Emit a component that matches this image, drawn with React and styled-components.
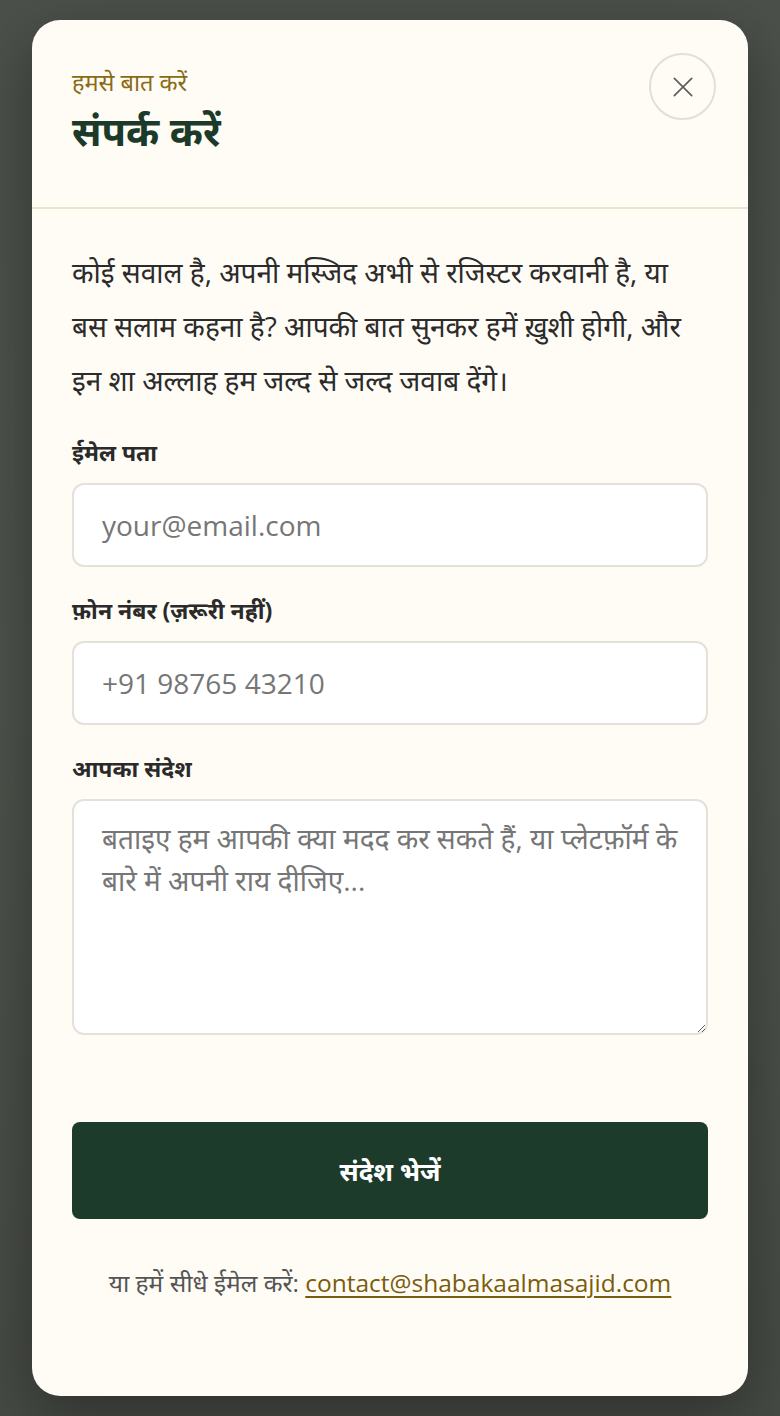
import React from "react";
import styled, { createGlobalStyle } from "styled-components";

const Global = createGlobalStyle`
  html, body { margin: 0; padding: 0; }
  body {
    font-family: "Open Sans", "Noto Sans", sans-serif;
    background: #4a4f49;
  }
  * { box-sizing: border-box; }
`;

const Overlay = styled.div`
  min-height: 1416px;
  padding: 20px 32px;
  background:
    radial-gradient(ellipse 70% 8% at 50% 76%, rgba(30, 34, 30, 0.55), transparent 70%),
    linear-gradient(180deg, #4b504a 0%, #4d524b 50%, #464a44 100%);
`;

const Modal = styled.div`
  background: #fffcf5;
  border-radius: 28px;
  height: 1376px;
  display: flex;
  flex-direction: column;
  overflow: hidden;
  box-shadow: 0 20px 60px rgba(0, 0, 0, 0.35);
`;

const Header = styled.header`
  display: flex;
  justify-content: space-between;
  align-items: flex-start;
  padding: 33px 32px 0 40px;
  height: 189px;
  border-bottom: 2px solid #ede4cf;
`;

const TitleBlock = styled.div`
  display: flex;
  flex-direction: column;
  padding-top: 14px;
`;

const Eyebrow = styled.span`
  font-size: 23.5px;
  line-height: 30px;
  color: #8a6a14;
`;

const Title = styled.h2`
  margin: 8px 0 0;
  font-size: 40px;
  line-height: 52px;
  font-weight: 700;
  color: #1b3a2a;
`;

const CloseButton = styled.button`
  width: 67px;
  height: 67px;
  border-radius: 50%;
  border: 2px solid #e2dfd8;
  background: transparent;
  display: flex;
  align-items: center;
  justify-content: center;
  padding: 0;
  cursor: pointer;
`;

const Body = styled.div`
  padding: 36px 40px 40px;
  display: flex;
  flex-direction: column;
`;

const Intro = styled.p`
  margin: 0 0 30px;
  font-size: 28px;
  line-height: 54px;
  color: #2b2b2b;
`;

const Field = styled.div`
  display: flex;
  flex-direction: column;
  margin-bottom: ${(p) => p.$mb ?? 28}px;
`;

const Label = styled.label`
  font-size: 23px;
  font-weight: 700;
  line-height: 30px;
  color: #2a2a2a;
  margin-bottom: 16px;
`;

const Input = styled.input`
  height: 84px;
  border: 2px solid #e4e1db;
  border-radius: 12px;
  background: #ffffff;
  padding: 0 28px;
  font-family: "Open Sans", "Noto Sans", sans-serif;
  font-size: 28px;
  color: #333;
  outline: none;
  &::placeholder { color: #767676; }
`;

const TextArea = styled.textarea`
  height: 236px;
  border: 2px solid #e4e1db;
  border-radius: 12px;
  background: #ffffff;
  padding: 16px 20px 16px 28px;
  font-family: "Open Sans", "Noto Sans", sans-serif;
  font-size: 28px;
  line-height: 42px;
  color: #333;
  outline: none;
  resize: vertical;
  &::placeholder { color: #767676; }
`;

const SubmitButton = styled.button`
  margin-top: 87px;
  height: 97px;
  border: none;
  border-radius: 8px;
  background: #1c3b2b;
  color: #ffffff;
  font-family: "Open Sans", "Noto Sans", sans-serif;
  font-size: 26px;
  font-weight: 700;
  cursor: pointer;
`;

const Footer = styled.p`
  margin: 47px 0 0;
  text-align: center;
  font-size: 24.5px;
  line-height: 34px;
  color: #555;
`;

const Link = styled.a`
  color: #7a5c0e;
  text-decoration: underline;
  text-underline-offset: 4px;
`;

export default function App() {
  return (
    <>
      <Global />
      <Overlay>
        <Modal>
          <Header>
            <TitleBlock>
              <Eyebrow>हमसे बात करें</Eyebrow>
              <Title>संपर्क करें</Title>
            </TitleBlock>
            <CloseButton aria-label="बंद करें">
              <svg width="26" height="26" viewBox="0 0 24 24" fill="none" stroke="#5f5f5f" strokeWidth="1.6" strokeLinecap="round">
                <path d="M4 4L20 20M20 4L4 20" />
              </svg>
            </CloseButton>
          </Header>
          <Body>
            <Intro>
              कोई सवाल है, अपनी मस्जिद अभी से रजिस्टर करवानी है, या बस सलाम कहना है? आपकी बात सुनकर हमें ख़ुशी होगी, और इन शा अल्लाह हम जल्द से जल्द जवाब देंगे।
            </Intro>
            <Field>
              <Label>ईमेल पता</Label>
              <Input type="email" placeholder="your@email.com" />
            </Field>
            <Field>
              <Label>फ़ोन नंबर (ज़रूरी नहीं)</Label>
              <Input type="tel" placeholder="+91 98765 43210" />
            </Field>
            <Field $mb={0}>
              <Label>आपका संदेश</Label>
              <TextArea placeholder="बताइए हम आपकी क्या मदद कर सकते हैं, या प्लेटफ़ॉर्म के बारे में अपनी राय दीजिए..." />
            </Field>
            <SubmitButton>संदेश भेजें</SubmitButton>
            <Footer>
              या हमें सीधे ईमेल करें: <Link href="#">contact@shabakaalmasajid.com</Link>
            </Footer>
          </Body>
        </Modal>
      </Overlay>
    </>
  );
}
